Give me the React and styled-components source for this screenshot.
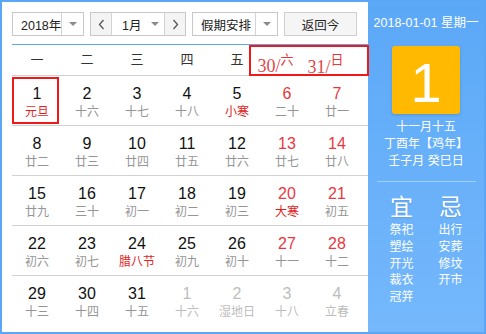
import React from "react";
import styled, { createGlobalStyle } from "styled-components";

const GlobalStyle = createGlobalStyle`
  html, body {
    margin: 0;
    padding: 0;
    background: #fff;
  }
  body {
    font-family: "Liberation Sans", "Noto Sans CJK SC", sans-serif;
  }
`;

const Frame = styled.div`
  display: flex;
  width: 486px;
  height: 334px;
  box-sizing: border-box;
  border: 2px solid #5ca7f5;
`;

const Main = styled.div`
  width: 366px;
  padding: 10px 0 0 10px;
  box-sizing: border-box;
  background: #fff;
`;

const Toolbar = styled.div`
  display: flex;
  gap: 6px;
  height: 24px;
  font-size: 12.5px;
  color: #222;
`;

const SelectBox = styled.div`
  display: flex;
  width: ${(p) => p.w}px;
  height: 24px;
  box-sizing: border-box;
  border: 1px solid #c8c8c8;
  background: #fff;
`;

const SelectText = styled.div`
  flex: 1;
  display: flex;
  align-items: center;
  padding-left: ${(p) => p.pad ?? 8}px;
  white-space: nowrap;
  overflow: hidden;
`;

const CaretBox = styled.div`
  width: ${(p) => p.w || 21}px;
  flex-shrink: 0;
  display: flex;
  align-items: center;
  justify-content: center;
  border-left: ${(p) => (p.line ? "1px solid #d4d4d4" : "none")};
`;

const Caret = styled.span`
  width: 0;
  height: 0;
  border-left: 4px solid transparent;
  border-right: 4px solid transparent;
  border-top: 4px solid #8a8a8a;
`;

const ArrowBtn = styled.div`
  width: 20px;
  flex-shrink: 0;
  display: flex;
  align-items: center;
  justify-content: center;
  background: #f4f4f4;
  border-${(p) => (p.side === "left" ? "right" : "left")}: 1px solid #d4d4d4;
`;

const TodayBtn = styled.div`
  width: 73px;
  height: 24px;
  box-sizing: border-box;
  border: 1px solid #cfcfcf;
  background: #f5f5f5;
  display: flex;
  align-items: center;
  justify-content: center;
`;

const Header = styled.div`
  position: relative;
  display: grid;
  grid-template-columns: repeat(7, 50px);
  margin-top: 8px;
  height: 32px;
  box-sizing: border-box;
  border-top: 1px solid #5ca7f5;
  border-bottom: 1px solid #cfcfcf;
`;

const WeekCell = styled.div`
  position: relative;
  text-align: center;
  line-height: 30px;
  font-size: 13px;
  color: ${(p) => (p.red ? "#e23a3a" : "#333")};
`;

const WeekChar = styled.span`
  position: relative;
  display: inline-block;
`;

const DatePrefix = styled.span`
  position: absolute;
  right: 100%;
  top: ${(p) => p.top}px;
  font-family: "Liberation Serif", serif;
  font-size: 18px;
  line-height: 18px;
  color: #e04848;
  white-space: nowrap;
`;

const MarkBox = styled.div`
  position: absolute;
  left: 237px;
  top: 0;
  width: 120px;
  height: 31px;
  box-sizing: border-box;
  border: 2px solid #f01818;
`;

const WeekRow = styled.div`
  display: grid;
  grid-template-columns: repeat(7, 50px);
  height: 50px;
  box-sizing: border-box;
  border-bottom: ${(p) => (p.last ? "none" : "1px solid #d2d2d2")};
`;

const DayCell = styled.div`
  position: relative;
  text-align: center;
  padding-top: 8px;

  &::after {
    content: "";
    display: ${(p) => (p.today ? "block" : "none")};
    position: absolute;
    left: 0;
    top: 1px;
    width: 47px;
    height: 47px;
    box-sizing: border-box;
    border: 2px solid #f01818;
  }
`;

const DayNum = styled.div`
  font-size: 16px;
  line-height: 20px;
  color: ${(p) => (p.other ? "#bdbdbd" : p.red ? "#e8383d" : "#111")};
`;

const Lunar = styled.div`
  font-size: 12px;
  line-height: 16px;
  color: ${(p) => (p.other ? "#bdbdbd" : p.red ? "#e01e1e" : "#959595")};
  white-space: nowrap;
`;

const Side = styled.div`
  flex: 1;
  display: flex;
  flex-direction: column;
  align-items: center;
  padding-top: 11px;
  background: linear-gradient(#5ba8f7, #75b8fc);
  color: #fff;
`;

const DateLine = styled.div`
  font-size: 12.5px;
  line-height: 20px;
  white-space: nowrap;
`;

const BigDay = styled.div`
  width: 68px;
  height: 68px;
  margin-top: 13px;
  padding-top: 5px;
  box-sizing: border-box;
  display: flex;
  align-items: center;
  justify-content: center;
  border-radius: 3px;
  background: #ffb900;
  box-shadow: 0 1px 3px rgba(0, 0, 0, 0.15);
  font-size: 56px;
  line-height: 1;
`;

const LunarInfo = styled.div`
  margin-top: 5px;
  font-size: 12px;
  line-height: 17px;
  text-align: center;
  white-space: nowrap;
`;

const Divider = styled.div`
  width: 99px;
  height: 1px;
  margin-top: 11px;
  background: rgba(255, 255, 255, 0.38);
`;

const Advice = styled.div`
  display: grid;
  grid-template-columns: 49px 49px;
  margin-top: 10px;
  text-align: center;
`;

const AdviceTitle = styled.div`
  font-size: 23px;
  line-height: 30px;
  text-shadow: 0 1px 2px rgba(0, 0, 0, 0.12);
`;

const AdviceItem = styled.div`
  font-size: 12px;
  line-height: 16.75px;
`;

const Chevron = ({ dir }) => (
  <svg width="7" height="11" viewBox="0 0 7 11">
    <polyline
      points={dir === "left" ? "5.5,1 1.5,5.5 5.5,10" : "1.5,1 5.5,5.5 1.5,10"}
      fill="none"
      stroke="#555"
      strokeWidth="1.3"
    />
  </svg>
);

const weekdays = [
  { label: "一" },
  { label: "二" },
  { label: "三" },
  { label: "四" },
  { label: "五" },
  { label: "六", red: true, prefix: "30/", top: 12 },
  { label: "日", red: true, prefix: "31/", top: 13 },
];

// [number, lunar, flags]  r = red number, h = red lunar, o = other month, t = today
const weeks = [
  [["1", "元旦", "th"], ["2", "十六"], ["3", "十七"], ["4", "十八"], ["5", "小寒", "h"], ["6", "二十", "r"], ["7", "廿一", "r"]],
  [["8", "廿二"], ["9", "廿三"], ["10", "廿四"], ["11", "廿五"], ["12", "廿六"], ["13", "廿七", "r"], ["14", "廿八", "r"]],
  [["15", "廿九"], ["16", "三十"], ["17", "初一"], ["18", "初二"], ["19", "初三"], ["20", "大寒", "rh"], ["21", "初五", "r"]],
  [["22", "初六"], ["23", "初七"], ["24", "腊八节", "h"], ["25", "初九"], ["26", "初十"], ["27", "十一", "r"], ["28", "十二", "r"]],
  [["29", "十三"], ["30", "十四"], ["31", "十五"], ["1", "十六", "o"], ["2", "湿地日", "o"], ["3", "十八", "o"], ["4", "立春", "o"]],
];

const yi = ["祭祀", "塑绘", "开光", "裁衣", "冠笄"];
const ji = ["出行", "安葬", "修坟", "开市"];

export default function App() {
  return (
    <>
      <GlobalStyle />
      <Frame>
        <Main>
          <Toolbar>
            <SelectBox w={72}>
              <SelectText>2018年</SelectText>
              <CaretBox line>
                <Caret />
              </CaretBox>
            </SelectBox>
            <SelectBox w={96}>
              <ArrowBtn side="left">
                <Chevron dir="left" />
              </ArrowBtn>
              <SelectText pad={10}>1月</SelectText>
              <CaretBox w={18}>
                <Caret />
              </CaretBox>
              <ArrowBtn side="right">
                <Chevron dir="right" />
              </ArrowBtn>
            </SelectBox>
            <SelectBox w={86}>
              <SelectText>假期安排</SelectText>
              <CaretBox line>
                <Caret />
              </CaretBox>
            </SelectBox>
            <TodayBtn>返回今</TodayBtn>
          </Toolbar>

          <Header>
            {weekdays.map((d) => (
              <WeekCell key={d.label} red={d.red}>
                <WeekChar>
                  {d.prefix && <DatePrefix top={d.top}>{d.prefix}</DatePrefix>}
                  {d.label}
                </WeekChar>
              </WeekCell>
            ))}
            <MarkBox />
          </Header>

          {weeks.map((week, wi) => (
            <WeekRow key={wi} last={wi === weeks.length - 1}>
              {week.map(([num, lunar, flags = ""], di) => (
                <DayCell key={di} today={flags.includes("t")}>
                  <DayNum red={flags.includes("r")} other={flags.includes("o")}>
                    {num}
                  </DayNum>
                  <Lunar red={flags.includes("h")} other={flags.includes("o")}>
                    {lunar}
                  </Lunar>
                </DayCell>
              ))}
            </WeekRow>
          ))}
        </Main>

        <Side>
          <DateLine>2018-01-01 星期一</DateLine>
          <BigDay>1</BigDay>
          <LunarInfo>
            <div>十一月十五</div>
            <div>丁酉年【鸡年】</div>
            <div>壬子月 癸巳日</div>
          </LunarInfo>
          <Divider />
          <Advice>
            <div>
              <AdviceTitle>宜</AdviceTitle>
              {yi.map((t) => (
                <AdviceItem key={t}>{t}</AdviceItem>
              ))}
            </div>
            <div>
              <AdviceTitle>忌</AdviceTitle>
              {ji.map((t) => (
                <AdviceItem key={t}>{t}</AdviceItem>
              ))}
            </div>
          </Advice>
        </Side>
      </Frame>
    </>
  );
}
